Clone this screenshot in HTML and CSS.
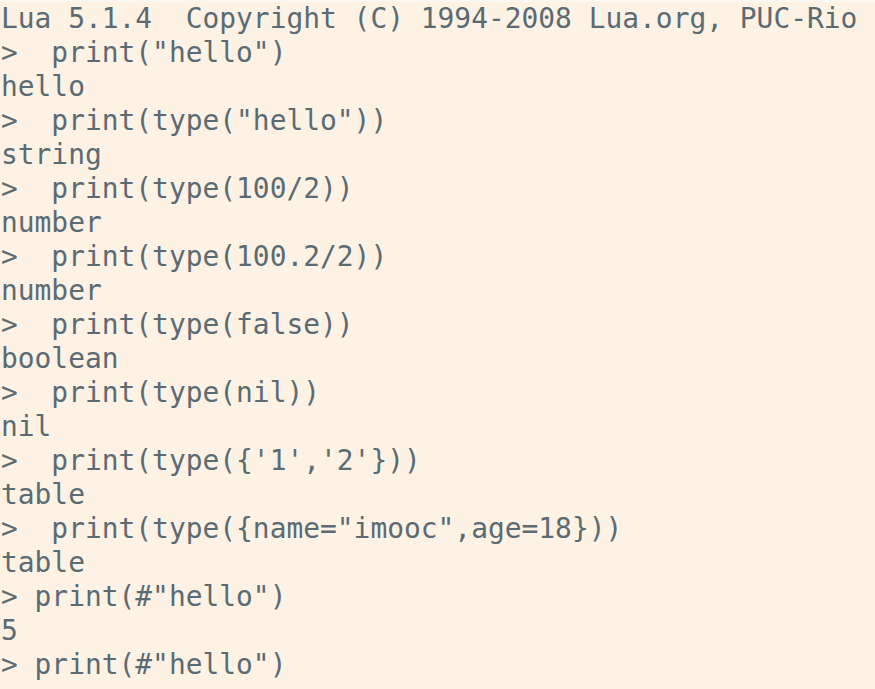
FILE: index.html
```html
<!DOCTYPE html>
<html>
<head>
<meta charset="utf-8">
<link rel="stylesheet" href="styles.css">
</head>
<body>
<div class="term">
<div class="line">Lua 5.1.4  Copyright (C) 1994-2008 Lua.org, PUC-Rio</div>
<div class="line">&gt;  print("hello")</div>
<div class="line">hello</div>
<div class="line">&gt;  print(type("hello"))</div>
<div class="line">string</div>
<div class="line">&gt;  print(type(100/2))</div>
<div class="line">number</div>
<div class="line">&gt;  print(type(100.2/2))</div>
<div class="line">number</div>
<div class="line">&gt;  print(type(false))</div>
<div class="line">boolean</div>
<div class="line">&gt;  print(type(nil))</div>
<div class="line">nil</div>
<div class="line">&gt;  print(type({'1','2'}))</div>
<div class="line">table</div>
<div class="line">&gt;  print(type({name="imooc",age=18}))</div>
<div class="line">table</div>
<div class="line">&gt; print(#"hello")</div>
<div class="line">5</div>
<div class="line">&gt; print(#"hello")</div>
</div>
</body>
</html>
```
FILE: styles.css
```css
html, body {
  margin: 0;
  padding: 0;
  background: #fdf2e3;
  height: 100%;
  overflow: hidden;
}
.term {
  border-top: 2px solid #fbf7f0;
  padding: 0 0 0 1px;
  font-family: "DejaVu Sans Mono", monospace;
  font-size: 27.9px;
  line-height: 34px;
  color: #5a6b74;
}
.line {
  height: 34px;
  white-space: pre;
}
```
